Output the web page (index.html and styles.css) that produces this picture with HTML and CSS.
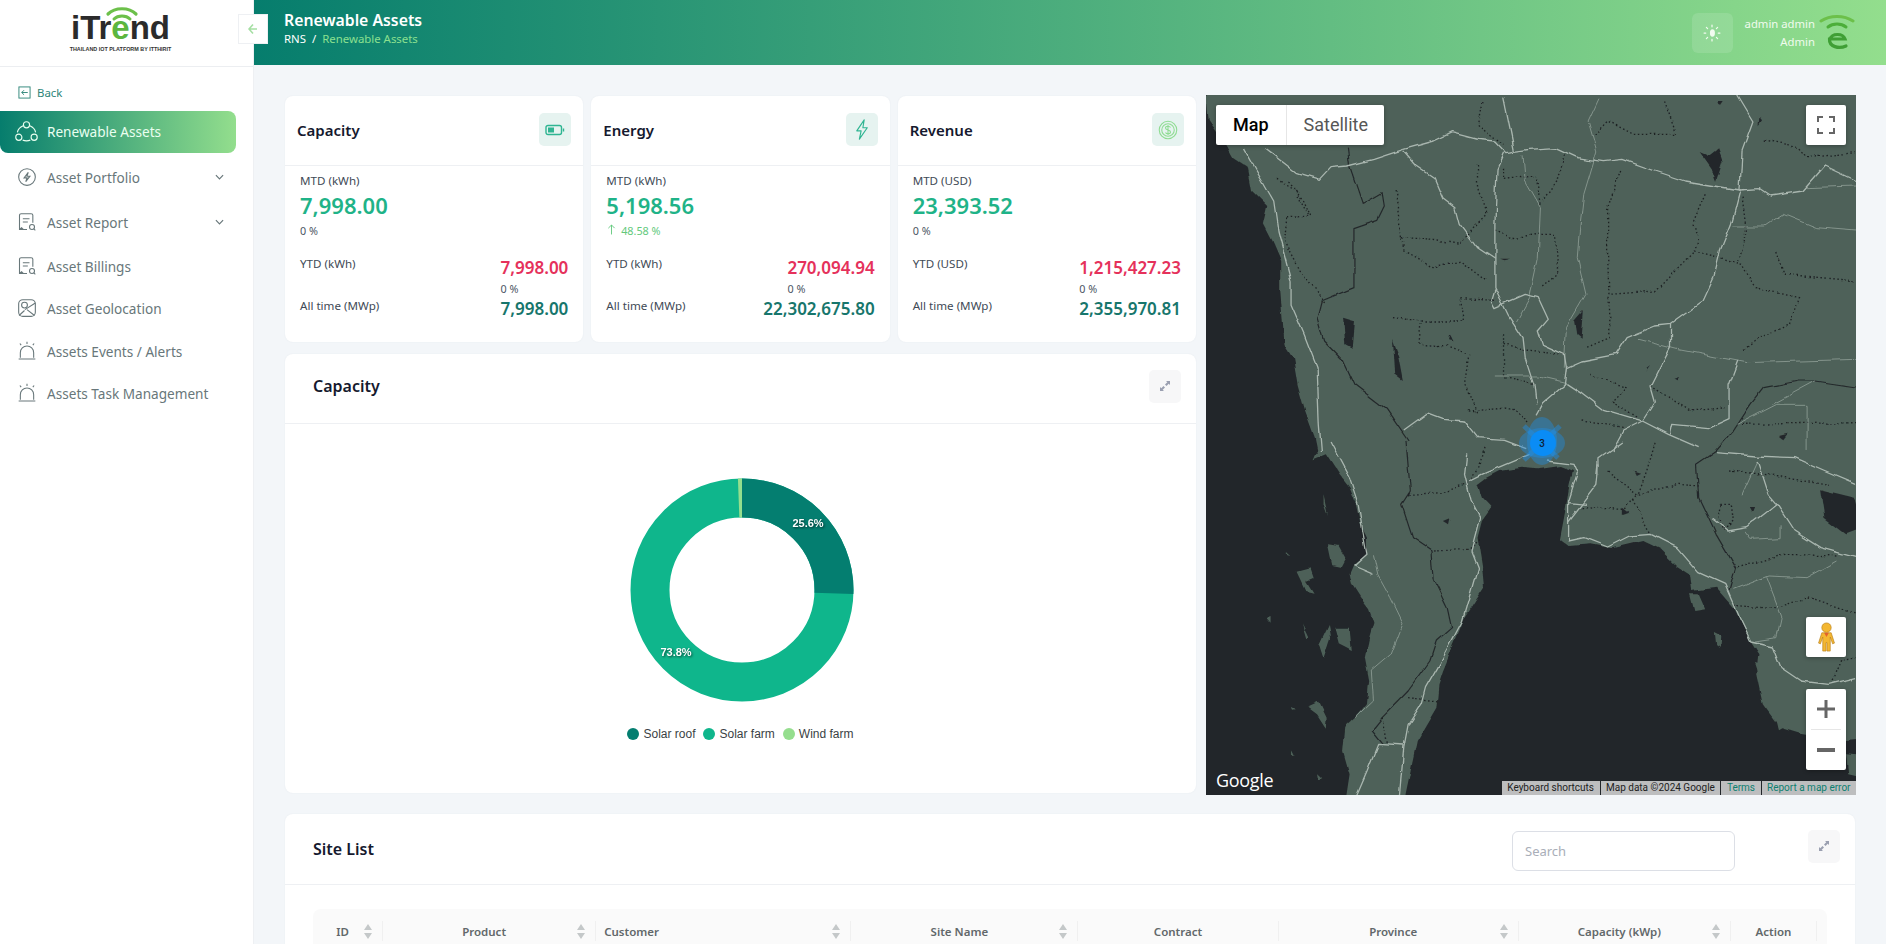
FILE: index.html
```html
<!DOCTYPE html>
<html lang="en">

<head>
    <meta charset="UTF-8">
    <title>Renewable Assets</title>
    <link rel="stylesheet" href="styles.css">
</head>

<body>
    <aside class="sidebar">
        <div class="logo">
            <svg class="logo-wifi" viewBox="0 0 34 20" width="34" height="20">
                <path d="M3 8 C10 1 24 1 31 8" fill="none" stroke="#6cc04a" stroke-width="3.2" stroke-linecap="round"/>
                <path d="M9 13 C13 9 21 9 25 13" fill="none" stroke="#6cc04a" stroke-width="3" stroke-linecap="round"/>
            </svg>
            <div class="logo-word">iTr<span class="logo-e">e</span>nd</div>
            <div class="logo-sub">THAILAND IOT PLATFORM BY ITTHIRIT</div>
        </div>
        <a class="back">
            <svg viewBox="0 0 14 14" width="13" height="13" fill="none" stroke="#2d8578" stroke-width="1">
                <rect x="1" y="1" width="12" height="12"/>
                <path d="M10.5 7H4M6.5 4.5 4 7l2.5 2.5"/>
            </svg>
            Back
        </a>
        <nav class="menu">
            <div class="menu-item active">
                <svg viewBox="0 0 24 24" width="23" height="23" fill="none" stroke="currentColor" stroke-width="1.200">
                    <circle cx="12" cy="5" r="3.200"/><circle cx="4" cy="18" r="3.200"/><circle cx="20" cy="18" r="3.200"/>
                    <path d="M8 21c2.500 1 5.500 1 8 0M2.500 13C3 10 5 7.500 8.500 6M21.500 13C21 10 19 7.500 15.500 6"/>
                </svg>
                <span>Renewable Assets</span>
            </div>
            <div class="menu-item">
                <svg viewBox="0 0 24 24" width="20" height="20" fill="none" stroke="currentColor" stroke-width="1.3">
                    <circle cx="12" cy="12" r="10"/><path d="M13.500 6.500 8.500 13H12l-1.500 4.500 5-6.500h-3.500z"/>
                </svg>
                <span>Asset Portfolio</span>
                <svg class="chev" viewBox="0 0 10 6" width="9" height="6" fill="none" stroke="currentColor" stroke-width="1.300"><path d="M1 1l4 4 4-4"/></svg>
            </div>
            <div class="menu-item item-report">
                <svg viewBox="0 0 24 24" width="20" height="20" fill="none" stroke="currentColor" stroke-width="1.3">
                    <path d="M12 21H5l-2 0V4a2 2 0 0 1 2-2h12a2 2 0 0 1 2 2v9M7 8h8M7 12h6M3 21l2.500-2 2 2"/><circle cx="18" cy="18" r="3"/><path d="m20 20 2 2"/>
                </svg>
                <span>Asset Report</span>
                <svg class="chev" viewBox="0 0 10 6" width="9" height="6" fill="none" stroke="currentColor" stroke-width="1.300"><path d="M1 1l4 4 4-4"/></svg>
            </div>
            <div class="menu-item item-billing">
                <svg viewBox="0 0 24 24" width="20" height="20" fill="none" stroke="currentColor" stroke-width="1.3">
                    <path d="M12 21H5l-2 0V4a2 2 0 0 1 2-2h12a2 2 0 0 1 2 2v9M7 8h8M7 12h6M3 21l2.500-2 2 2"/><circle cx="18" cy="18" r="3"/><path d="m20 20 2 2"/>
                </svg>
                <span>Asset Billings</span>
            </div>
            <div class="menu-item">
                <svg viewBox="0 0 24 24" width="20" height="20" fill="none" stroke="currentColor" stroke-width="1.3">
                    <rect x="2" y="2" width="20" height="20" rx="5"/><circle cx="9" cy="8.500" r="3.500"/><path d="M9 15 2.500 21M9.500 14 22 6M12 14l9 7"/>
                </svg>
                <span>Asset Geolocation</span>
            </div>
            <div class="menu-item item-events">
                <svg viewBox="0 0 24 24" width="20" height="20" fill="none" stroke="currentColor" stroke-width="1.3">
                    <path d="M4 20v-6a8 8 0 0 1 16 0v6M2 21.500h20M12 1v2.500M3.500 3 5 5M20.500 3 19 5"/>
                </svg>
                <span>Assets Events / Alerts</span>
            </div>
            <div class="menu-item">
                <svg viewBox="0 0 24 24" width="20" height="20" fill="none" stroke="currentColor" stroke-width="1.3">
                    <path d="M4 20v-6a8 8 0 0 1 16 0v6M2 21.500h20M12 1v2.500M3.500 3 5 5M20.500 3 19 5"/>
                </svg>
                <span>Assets Task Management</span>
            </div>
        </nav>
    </aside>

    <button class="collapse">
        <svg viewBox="0 0 10 12" width="10" height="12" fill="none" stroke="#a5dfa3" stroke-width="1.600"><path d="M9 6H1.500M5 1.500 1 6l4 4.500"/></svg>
    </button>

    <div class="main">
        <header class="topbar">
            <div class="topbar-left">
                <div class="page-title">Renewable Assets</div>
                <div class="crumbs">RNS <span class="crumb-sep">/</span> <span class="crumb-now">Renewable Assets</span></div>
            </div>
            <div class="topbar-right">
                <div class="theme-btn">
                    <svg viewBox="0 0 24 24" width="20" height="20" fill="none" stroke="#f2fbf0" stroke-width="1.500" stroke-linecap="round">
                        <ellipse cx="12.500" cy="12" rx="3" ry="4.500" fill="#f2fbf0" stroke="none"/>
                        <path d="M12 2.500v2M12 19.500v2M2.500 12h2M19.500 12h2M5.300 5.300l1.400 1.400M17.300 17.300l1.400 1.400M5.300 18.700l1.400-1.400M17.300 6.700l1.400-1.400"/>
                    </svg>
                </div>
                <div class="user">
                    <div>admin admin</div>
                    <div>Admin</div>
                </div>
                <svg class="avatar" viewBox="0 0 36 36" width="36" height="36" fill="none" stroke-linecap="round">
                    <path d="M2 6C11 0 25 0 34 6" stroke="#6cc04a" stroke-width="3"/>
                    <path d="M9 12C14 8 22 8 27 12" stroke="#4cae3a" stroke-width="3"/>
                    <path d="M11 24C13 18 24 18 26 24H10.500C10 32 20 34 27 31" stroke="#3f9f35" stroke-width="3.200"/>
                </svg>
            </div>
        </header>

        <div class="content">
            <div class="top-grid">
                <div class="left-col">
                    <div class="stats">
                        <section class="card stat">
                            <div class="stat-head">
                                <h3>Capacity</h3>
                                <div class="stat-icon">
                                    <svg viewBox="0 0 20 12" width="20" height="12" fill="none" stroke="#2fb592" stroke-width="1.400">
                                        <rect x="1" y="1.500" width="15.500" height="9" rx="2"/><rect x="3" y="3.500" width="6" height="5" fill="#2fb592" stroke="none"/><path d="M18.500 4.500v3"/>
                                    </svg>
                                </div>
                            </div>
                            <div class="stat-body">
                                <div class="lbl">MTD (kWh)</div>
                                <div class="big">7,998.00</div>
                                <div class="pct">0 %</div>
                                <div class="row row-ytd">
                                    <div class="lbl">YTD (kWh)</div>
                                    <div class="side">
                                        <div class="val red">7,998.00</div>
                                        <div class="pct">0 %</div>
                                    </div>
                                </div>
                                <div class="row">
                                    <div class="lbl">All time (MWp)</div>
                                    <div class="val teal">7,998.00</div>
                                </div>
                            </div>
                        </section>
                        <section class="card stat">
                            <div class="stat-head">
                                <h3>Energy</h3>
                                <div class="stat-icon">
                                    <svg viewBox="0 0 16 24" width="14" height="21" fill="none" stroke="#2fb592" stroke-width="1.300" stroke-linejoin="round">
                                        <path d="M10.500 1 2 13.500h5L5 23l9-13H9z"/>
                                    </svg>
                                </div>
                            </div>
                            <div class="stat-body">
                                <div class="lbl">MTD (kWh)</div>
                                <div class="big">5,198.56</div>
                                <div class="pct up">
                                    <svg viewBox="0 0 10 12" width="9" height="11" fill="none" stroke="#5fc77a" stroke-width="1"><path d="M5 11.500V1M1.500 4.500 5 1l3.500 3.500"/></svg>
                                    48.58 %
                                </div>
                                <div class="row row-ytd">
                                    <div class="lbl">YTD (kWh)</div>
                                    <div class="side">
                                        <div class="val red">270,094.94</div>
                                        <div class="pct">0 %</div>
                                    </div>
                                </div>
                                <div class="row">
                                    <div class="lbl">All time (MWp)</div>
                                    <div class="val teal">22,302,675.80</div>
                                </div>
                            </div>
                        </section>
                        <section class="card stat">
                            <div class="stat-head">
                                <h3>Revenue</h3>
                                <div class="stat-icon">
                                    <svg viewBox="0 0 24 24" width="20" height="20" fill="none" stroke="#8fdc92" stroke-width="1.300">
                                        <circle cx="12" cy="12" r="10.500"/><circle cx="12" cy="12" r="7.500"/>
                                        <path d="M15 9c-.5-1-1.500-1.500-3-1.500-1.800 0-3 .9-3 2.200 0 3 6 1.600 6 4.600 0 1.300-1.200 2.200-3 2.200-1.500 0-2.500-.5-3-1.500M12 6v12"/>
                                    </svg>
                                </div>
                            </div>
                            <div class="stat-body">
                                <div class="lbl">MTD (USD)</div>
                                <div class="big">23,393.52</div>
                                <div class="pct">0 %</div>
                                <div class="row row-ytd">
                                    <div class="lbl">YTD (USD)</div>
                                    <div class="side">
                                        <div class="val red">1,215,427.23</div>
                                        <div class="pct">0 %</div>
                                    </div>
                                </div>
                                <div class="row">
                                    <div class="lbl">All time (MWp)</div>
                                    <div class="val teal">2,355,970.81</div>
                                </div>
                            </div>
                        </section>
                    </div>

                    <section class="card chart-card">
                        <div class="card-head chart-head">
                            <h2>Capacity</h2>
                            <div class="expand">
                                <svg viewBox="0 0 12 12" width="12" height="12" fill="#9a9fb0"><path d="M7 1h4v4L9.700 3.700 7.500 6 6 4.500l2.300-2.200zM5 11H1V7l1.300 1.300L4.500 6 6 7.500 3.700 9.700z"/></svg>
                            </div>
                        </div>
                        <div class="chart-body">
                            <svg class="donut" viewBox="0 0 224 224" width="224" height="224">
                                <g transform="rotate(-90 112 112)" fill="none" stroke-width="39">
                                    <circle cx="112" cy="112" r="92" pathLength="100" stroke="#0fb68c" />
                                    <circle cx="112" cy="112" r="92" pathLength="100" stroke="#047e70" stroke-dasharray="25.600 74.400"/>
                                    <circle cx="112" cy="112" r="92" pathLength="100" stroke="#95de8e" stroke-dasharray="0.600 99.400" stroke-dashoffset="0.600"/>
                                </g>
                                <text class="donut-label" x="178" y="49">25.6%</text>
                                <text class="donut-label" x="46" y="178">73.8%</text>
                            </svg>
                            <div class="legend">
                                <span class="legend-item"><i class="dot dot-roof"></i>Solar roof</span>
                                <span class="legend-item"><i class="dot dot-farm"></i>Solar farm</span>
                                <span class="legend-item"><i class="dot dot-wind"></i>Wind farm</span>
                            </div>
                        </div>
                    </section>
                </div>

                <div class="map">
                    <svg class="map-art" viewBox="0 -1 650 700" width="650" height="700">
                        <defs>
                            <filter id="rough" filterUnits="userSpaceOnUse" x="-10" y="-10" width="670" height="720">
                                <feTurbulence type="fractalNoise" baseFrequency=".05" numOctaves="2" seed="4"/>
                                <feDisplacementMap in="SourceGraphic" scale="6" xChannelSelector="R" yChannelSelector="G"/>
                            </filter>
                        </defs>
                        <rect y="-1" width="650" height="700" fill="#4e6159"/>
                        <g filter="url(#rough)">
                        <!-- upper half, traced from the top of the map -->
                        <g transform="translate(-6 -5) scale(.43365 .33333)">
                            <polygon class="water" points="-20,0 14,0 20,90 60,165 75,200 110,230 120,300 155,345 145,400 165,450 185,510 185,600 190,680 195,760 215,800 225,880 240,950 265,1040 272,1085 -20,1085"/>
                            <polygon class="water" points="1150,180 1175,195 1195,175 1205,210 1190,270 1180,235"/>
                            <polygon class="water" points="1290,75 1296,85 1288,100"/>
                            <polygon class="water" points="1190,30 1203,30 1195,45"/>
                            <polygon class="water" points="330,680 355,690 350,770 335,760"/>
                            <polygon class="water" points="445,745 460,800 470,870 450,850"/>
                            <polygon class="water" points="865,690 885,660 880,740 870,730"/>
                            <polygon class="water" points="1030,830 1038,822 1028,840"/>
                            <polygon class="water" points="1092,860 1105,855 1100,865"/>
                            <polygon class="water" points="1335,1035 1355,1028 1345,1045"/>
                            <polygon class="water" points="690,503 715,503 700,508"/>
                            <polygon class="water" points="572,745 582,748 575,728"/>
                            <polyline class="prov" points="340,170 345,225 375,340 420,305 425,345 410,385 355,410 355,590 280,630 270,680 285,750 330,810 355,880 430,955 480,1050"/>
                            <polyline class="prov" points="1513,888 1420,870 1380,870 1300,890 1270,940 1230,1020 1190,1080"/>
                            <polyline class="dots" points="200,380 255,375 240,330 200,270"/>
                            <polyline class="dots" points="200,380 195,450 240,560 290,640"/>
                            <polyline class="dots" points="465,440 540,445 600,460 630,410 660,370 640,290 640,215"/>
                            <polyline class="dots" points="450,300 465,440 470,480 540,530 600,510 660,570"/>
                            <polyline class="dots" points="700,230 700,265 775,255 785,350"/>
                            <polyline class="dots" points="680,420 720,440 780,430 820,430 825,550 790,590"/>
                            <polyline class="dots" points="840,190 830,250 790,330"/>
                            <polyline class="dots" points="910,130 940,90 1000,130 1100,130 1070,30"/>
                            <polyline class="dots" points="970,240 940,350 940,500 945,680 945,740 890,770"/>
                            <polyline class="dots" points="1165,310 1135,400 1150,440 1140,480 1080,560 1050,600 945,610"/>
                            <polyline class="dots" points="1140,480 1200,500 1250,520 1280,590 1380,620 1360,700 1290,740 1250,780"/>
                            <polyline class="dots" points="1300,150 1380,170 1400,200 1510,185"/>
                            <polyline class="dots" points="1250,320 1260,420 1240,510"/>
                            <polyline class="dots" points="1330,480 1350,550 1513,570"/>
                            <polyline class="dots" points="680,625 600,620 610,690 510,690 505,760 570,765 620,790 610,880 640,970"/>
                            <polyline class="dots" points="445,680 510,690"/>
                            <polyline class="dots" points="700,730 700,860 770,880"/>
                            <polyline class="dots" points="700,760 750,780 840,790"/>
                            <polyline class="dots" points="900,850 980,890 950,930 1010,980"/>
                            <polyline class="dots" points="1040,885 1130,960 1210,950"/>
                            <polyline class="dots" points="1250,1000 1513,995"/>
                            <polyline class="dots" points="620,960 720,950 760,1000"/>
                            <polyline class="dots" points="880,990 980,1010"/>
                            <polyline class="dots" points="175,265 220,300 250,370"/>
                            <polyline class="dots" points="650,30 640,100 700,160"/>
                            <polyline class="road thin" points="745,190 750,270 785,350 780,500 760,620 730,690"/>
                            <polyline class="road thin" points="920,20 895,90 915,180 885,310 875,420 870,500 890,610 845,710 840,830"/>
                            <polyline class="road thin" points="1230,405 1305,405 1345,370 1420,410 1513,420"/>
                            <polyline class="road thin" points="1010,745 1100,775 1260,815 1513,805"/>
                            <polyline class="road thin" points="680,855 780,855 845,875"/>
                            <polyline class="road thin" points="1400,290 1513,285"/>
                            <polyline class="road thin" points="1320,940 1420,870"/>
                            <polyline class="road thin" points="1240,1000 1330,940 1400,940 1400,1080"/>
                            <polyline class="road" points="470,175 540,150 580,125 640,145 680,150 705,185 760,175 820,170 870,200 930,212 975,205 1050,240 1120,270 1190,285 1245,297 1290,293 1315,315 1390,300 1440,225 1513,270"/>
                            <polyline class="road" points="150,170 190,210 225,245 275,265 300,230 340,225 400,205 470,175"/>
                            <polyline class="road" points="470,180 500,225 540,260 560,320 590,350 600,400 640,470 680,505"/>
                            <polyline class="road" points="700,20 725,180"/>
                            <polyline class="road" points="700,185 685,230 680,400 680,590 710,670 745,740 750,800 770,880 775,940"/>
                            <polyline class="road" points="100,170 130,240 170,330 180,420 210,570 210,640 240,730 270,830 275,1000 280,1080"/>
                            <polyline class="road" points="1240,15 1275,90 1250,180 1245,300 1225,400 1200,480 1185,560 1160,630 1085,700 1050,705 985,740 960,790 880,810 845,830 840,880 790,935 775,970"/>
                            <polyline class="road" points="1085,700 1085,770 1040,885 1050,930 1020,990 975,1020 950,1080"/>
                            <polyline class="road" points="680,595 672,630 680,650 750,610 780,620 803,685 780,720 790,760 840,790 845,830"/>
                            <polyline class="road" points="845,875 880,905 930,955 1020,990 1080,1030 1150,1070"/>
                            <polyline class="road" points="1240,810 1220,880 1220,980 1170,1010 1090,1000 1085,1030"/>
                            <polyline class="road" points="470,1020 525,968 560,985 610,990 640,1040 700,1045 750,1070"/>
                        </g>
                        <!-- lower half, gulf and peninsula -->
                        <g transform="translate(-6 345) scale(.43365 .33333)">
                            <polygon class="water" points="-20,-5 248,-5 270,30 262,55 290,40 320,100 345,140 360,190 370,250 385,290 385,340 355,370 345,400 350,430 370,470 390,505 400,545 390,590 380,650 390,720 385,790 360,830 335,860 330,930 345,1000 335,1085 -20,1085"/>
                            <polygon class="water" points="640,130 660,110 690,90 740,80 780,85 830,75 860,90 850,150 845,190 838,240 830,295 850,315 900,310 950,322 1020,300 1060,325 1100,375 1130,400 1135,450 1190,440 1230,500 1270,600 1290,640 1285,700 1300,790 1340,860 1390,880 1490,900 1530,895 1530,1085 470,1085 490,960 500,900 545,800 550,730 560,690 610,530 655,440 650,370 640,290 650,240 672,200 650,170"/>
                            <polygon class="land" points="285,160 295,225 285,190"/>
                            <polygon class="land" points="295,310 320,315 335,350 325,375 305,370"/>
                            <polygon class="land" points="225,395 255,385 262,410 245,420 262,455 245,450"/>
                            <polygon class="land" points="235,550 250,590 245,595"/>
                            <polygon class="land" points="275,610 295,555 300,590 285,650"/>
                            <polygon class="land" points="310,560 345,560 350,630 320,610"/>
                            <polygon class="land" points="250,800 275,785 292,830 290,860 270,820"/>
                            <polygon class="land" points="198,330 208,342 198,338"/>
                            <polygon class="land" points="210,800 220,810 212,812"/>
                            <polygon class="land" points="212,925 218,940 212,942"/>
                            <polygon class="land" points="155,530 165,525 165,545"/>
                            <polygon class="land" points="270,1000 282,1015 272,1018"/>
                            <polygon class="land" points="1130,460 1150,460 1165,505 1140,510"/>
                            <polygon class="land" points="1185,570 1200,580 1198,618 1188,610"/>
                            <polygon class="land" points="1280,665 1292,670 1290,705"/>
                            <polygon class="land" points="1330,840 1345,860 1335,868"/>
                            <polygon class="land" points="1490,940 1530,945 1530,1010 1495,1000"/>
                            <polygon class="water" points="1430,145 1510,170 1530,260 1490,280 1440,230"/>
                            <polygon class="water" points="1000,92 1015,98 1005,105"/>
                            <polygon class="water" points="975,200 990,215 975,222"/>
                            <polygon class="water" points="560,240 575,232 572,250"/>
                            <polygon class="water" points="1268,195 1280,195 1275,212"/>
                            <polyline class="prov" points="475,0 485,150 465,190 490,290 535,330 540,420 570,500 580,560 545,600 530,660 480,750 420,830 395,870 420,910"/>
                            <polyline class="prov" points="1190,30 1145,70 1150,170 1190,280 1235,380 1220,450"/>
                            <polyline class="dots" points="480,160 560,155 620,125 640,80 660,20"/>
                            <polyline class="dots" points="540,330 620,325 650,290"/>
                            <polyline class="dots" points="880,200 980,205 1010,160 1100,130 1150,135"/>
                            <polyline class="dots" points="940,90 1010,160 1030,90 1050,0"/>
                            <polyline class="dots" points="1000,175 1030,260 1040,280"/>
                            <polyline class="dots" points="1240,380 1350,340 1470,345"/>
                            <polyline class="dots" points="1230,490 1330,500 1400,470 1513,520"/>
                            <polyline class="dots" points="420,830 430,910"/>
                            <polyline class="dots" points="480,770 550,780"/>
                            <polyline class="dots" points="1220,90 1340,105 1450,130"/>
                            <polyline class="dots" points="1460,720 1480,660 1513,650"/>
                            <polyline class="dots" points="1200,190 1225,190 1230,240 1205,270 1195,230 1200,190"/>
                            <polyline class="road thin" points="400,340 410,400 440,470 468,545 440,640 395,690 400,780 360,830"/>
                            <polyline class="road thin" points="1230,445 1310,405 1400,410 1470,360"/>
                            <polyline class="road thin" points="1305,410 1340,530 1330,590 1280,600"/>
                            <polyline class="road thin" points="1340,250 1340,290 1270,295 1255,270"/>
                            <polyline class="road thin" points="1285,60 1250,160"/>
                            <polyline class="road" points="300,0 345,110 365,190 375,270 385,340 355,375 400,400"/>
                            <polyline class="road" points="615,40 610,100 625,180 645,230 625,330 640,380 625,450 605,540 560,650 520,740 510,790 480,850 470,920 460,1060"/>
                            <polyline class="road" points="470,915 410,910 385,990 360,1065"/>
                            <polyline class="road" points="760,40 650,100 620,120"/>
                            <polyline class="road" points="800,60 860,70 870,100 850,180 850,300"/>
                            <polyline class="road" points="920,70 915,130 880,190 850,240"/>
                            <polyline class="road" points="850,185 890,190"/>
                            <polyline class="road" points="850,300 885,290 940,318 990,285 1040,280 1100,320 1150,395 1210,430 1240,520 1270,600 1320,615 1340,680 1385,720 1450,730 1513,710"/>
                            <polyline class="road" points="975,0 920,50 920,100"/>
                            <polyline class="road" points="1190,35 1280,45 1370,50 1440,90 1513,130"/>
                            <polyline class="road" points="1285,60 1310,160 1330,190 1370,270 1430,320 1513,350"/>
                            <polyline class="road" points="1180,235 1215,270 1260,260 1330,190"/>
                        </g>
                        </g>
                        <!-- marker cluster -->
                        <g class="cluster">
                            <ellipse cx="336" cy="347" rx="23" ry="15" fill="#1f8fe8" opacity=".4"/>
                            <ellipse cx="336" cy="345" rx="15" ry="24" fill="#1f8fe8" opacity=".4"/>
                            <path d="M318 330 352 362M354 330 318 364" stroke="#1f8fe8" stroke-width="5" opacity=".45"/>
                            <circle cx="337" cy="347" r="13" fill="#0a8cf5"/>
                            <text class="cluster-num" x="336" y="351">3</text>
                        </g>
                    </svg>

                    <div class="map-type">
                        <span class="map-tab on">Map</span>
                        <span class="map-tab">Satellite</span>
                    </div>
                    <div class="map-btn map-full">
                        <svg viewBox="0 0 18 18" width="18" height="18" fill="none" stroke="#666" stroke-width="2"><path d="M1 6V1h5M12 1h5v5M17 12v5h-5M6 17H1v-5"/></svg>
                    </div>
                    <div class="map-btn map-peg">
                        <svg viewBox="0 0 20 32" width="19" height="30" fill="#f4b731" stroke="#b8801d" stroke-width=".7">
                            <circle cx="10" cy="6" r="5"/>
                            <path d="M5 11.500h10l3.500 11-2 .8L14 16v15h-3.500v-9h-1v9H6V16l-2.500 7.300-2-.8z"/>
                            <path d="M7.500 11.500h5L10 16z" fill="#e2632a" stroke="none"/>
                        </svg>
                    </div>
                    <div class="map-zoom">
                        <div class="zoom-btn"><svg viewBox="0 0 18 18" width="18" height="18" fill="#666"><path d="M7.500 0h3v7.500H18v3h-7.500V18h-3v-7.500H0v-3h7.500z"/></svg></div>
                        <div class="zoom-line"></div>
                        <div class="zoom-btn"><svg viewBox="0 0 18 18" width="18" height="18" fill="#666"><path d="M0 7h18v4H0z"/></svg></div>
                    </div>
                    <div class="google">Google</div>
                    <div class="attrib">
                        <span>Keyboard shortcuts</span>
                        <span>Map data ©2024 Google</span>
                        <span class="attr-link">Terms</span>
                        <span class="attr-link">Report a map error</span>
                    </div>
                </div>
            </div>

            <section class="card site-card">
                <div class="card-head site-head">
                    <h2>Site List</h2>
                    <input class="search" type="text" placeholder="Search">
                    <div class="expand">
                        <svg viewBox="0 0 12 12" width="12" height="12" fill="#9a9fb0"><path d="M7 1h4v4L9.700 3.700 7.500 6 6 4.500l2.300-2.200zM5 11H1V7l1.300 1.300L4.500 6 6 7.500 3.700 9.700z"/></svg>
                    </div>
                </div>
                <div class="table-wrap">
                    <table class="sites">
                        <colgroup>
                            <col class="c-id"><col class="c-product"><col class="c-customer"><col class="c-site"><col class="c-contract"><col class="c-province"><col class="c-capacity"><col class="c-action"><col class="c-gutter">
                        </colgroup>
                        <thead>
                            <tr>
                                <th><div class="th"><span class="th-name">ID</span><i class="sorter"></i></div></th>
                                <th><div class="th"><span class="th-name">Product</span><i class="sorter"></i></div></th>
                                <th><div class="th"><span class="th-name left">Customer</span><i class="sorter"></i></div></th>
                                <th><div class="th"><span class="th-name">Site Name</span><i class="sorter"></i></div></th>
                                <th><div class="th"><span class="th-name">Contract</span></div></th>
                                <th><div class="th"><span class="th-name">Province</span><i class="sorter"></i></div></th>
                                <th><div class="th"><span class="th-name">Capacity (kWp)</span><i class="sorter"></i></div></th>
                                <th><div class="th"><span class="th-name">Action</span></div></th>
                                <th class="gutter"></th>
                            </tr>
                        </thead>
                    </table>
                </div>
            </section>
        </div>
    </div>
</body>

</html>
```

FILE: styles.css
```css
* {
    box-sizing: border-box;
}

html,
body {
    height: 100%;
    margin: 0;
    overflow: hidden;
}

body {
    display: flex;
    position: relative;
    font-family: "Noto Sans", Arial, sans-serif;
    background-color: #f3f6f9;
    color: #1f2937;
}

h2,
h3 {
    margin: 0;
    font-weight: 600;
    color: #15192e;
}

/* sidebar */
.sidebar {
    flex: 0 0 254px;
    background-color: #fff;
    border-right: 1px solid #eef0f3;
}

.logo {
    position: relative;
    height: 67px;
    border-bottom: 1px solid #eceef1;
    padding-top: 9px;
    text-align: center;
}

.logo-wifi {
    position: absolute;
    left: 105px;
    top: 6px;
}

.logo-word {
    font-family: "Liberation Sans", Arial, sans-serif;
    font-weight: 700;
    font-size: 33px;
    line-height: 37px;
    color: #2b2b2b;
    margin-left: -12px;
}

.logo-e {
    color: #5cb63f;
}

.logo-sub {
    font-family: "Liberation Sans", Arial, sans-serif;
    font-size: 5.400px;
    font-weight: 700;
    line-height: 7px;
    margin-left: -12px;
    color: #333;
}

.back {
    display: flex;
    align-items: center;
    gap: 6px;
    height: 44px;
    padding: 6px 0 0 18px;
    font-size: 11.400px;
    color: #2d8578;
}

.menu-item {
    display: flex;
    align-items: center;
    width: 236px;
    height: 42px;
    padding-left: 17px;
    font-size: 13.600px;
    color: #68777a;
}

.menu-item svg:first-child {
    flex: none;
    margin-right: 10px;
}

.menu-item.active {
    padding: 0 0 2px 15px;
    margin-bottom: 3px;
    border-radius: 0 8px 8px 8px;
    background: linear-gradient(90deg, #067d6d, #93de8d);
    color: #e9fff0;
}

.menu-item.active svg:first-child {
    margin-right: 9px;
}

.item-report {
    margin-top: 3px;
}

.item-billing {
    margin-top: 2px;
}

.item-events {
    margin-top: 1px;
}

.chev {
    margin-left: auto;
    margin-right: 12px;
}

.collapse {
    position: absolute;
    left: 238px;
    top: 14px;
    width: 30px;
    height: 30px;
    padding: 0;
    display: flex;
    align-items: center;
    justify-content: center;
    background-color: #fff;
    border: 1px solid #eef0f3;
}

/* top bar */
.main {
    flex: 1;
    min-width: 0;
}

.topbar {
    display: flex;
    align-items: center;
    justify-content: space-between;
    height: 65px;
    padding: 0 31px 0 30px;
    background: linear-gradient(90deg, #067d6d, #93de8d);
    color: #fff;
}

.topbar-left {
    align-self: flex-start;
    padding-top: 9px;
}

.page-title {
    font-size: 15.800px;
    font-weight: 600;
    line-height: 22px;
}

.crumbs {
    font-size: 11.400px;
    line-height: 15px;
}

.crumb-sep {
    margin: 0 3px;
}

.crumb-now {
    color: #8be08f;
}

.topbar-right {
    display: flex;
    align-items: center;
}

.theme-btn {
    display: flex;
    align-items: center;
    justify-content: center;
    width: 41px;
    height: 40px;
    margin-right: 12px;
    border-radius: 6px;
    background-color: rgba(255, 255, 255, .12);
}

.user {
    font-size: 11.300px;
    line-height: 18px;
    text-align: right;
    color: #f0fbee;
    margin-right: 4px;
}

/* page content */
.content {
    padding: 31px 30px 0 31px;
}

.top-grid {
    display: flex;
    gap: 10px;
}

.left-col {
    width: 911px;
}

.card {
    background-color: #fff;
    border-radius: 8px;
    box-shadow: 0 0 2px rgba(40, 60, 80, .06);
}

.stats {
    display: flex;
    gap: 8px;
}

.stat {
    flex: 1;
    height: 246px;
}

.stat-head {
    display: flex;
    align-items: center;
    justify-content: space-between;
    height: 70px;
    padding: 0 12px 2px;
    border-bottom: 1px solid #eef0f3;
}

.stat-head h3 {
    font-size: 15px;
}

.stat-icon {
    display: flex;
    align-items: center;
    justify-content: center;
    width: 32px;
    height: 33px;
    border-radius: 5px;
    background-color: #e6f3f0;
}

.stat-body {
    padding: 7px 15px 0;
}

.lbl {
    font-size: 11.600px;
    line-height: 16px;
    color: #414a56;
}

.big {
    font-size: 22px;
    font-weight: 600;
    line-height: 30px;
    margin-top: 1px;
    color: #1fb388;
}

.pct {
    font-size: 10.800px;
    line-height: 14px;
    margin-top: 4px;
    color: #4b5563;
}

.pct.up {
    color: #63c97c;
}

.pct.up svg {
    margin: 0 2px 0 1px;
}

.row {
    display: flex;
    justify-content: space-between;
    height: 18px;
}

.row-ytd {
    height: 42px;
    margin-top: 18px;
}

.val {
    font-size: 17px;
    font-weight: 600;
    line-height: 22px;
}

.side {
    padding-top: 1px;
}

.side .pct {
    margin-top: 3px;
}

.red {
    color: #e5315b;
}

.teal {
    color: #17766c;
}

/* chart */
.chart-card {
    height: 439px;
    margin-top: 12px;
}

.card-head {
    display: flex;
    align-items: center;
    justify-content: space-between;
    height: 70px;
    padding: 0 15px 0 28px;
    border-bottom: 1px solid #eef0f3;
}

.chart-head {
    padding-bottom: 5px;
}

.card-head h2 {
    font-size: 16px;
}

.expand {
    display: flex;
    align-items: center;
    justify-content: center;
    width: 32px;
    height: 33px;
    border-radius: 5px;
    background-color: #f7f7f8;
}

.chart-body {
    display: flex;
    flex-direction: column;
    align-items: center;
    padding: 54px 0 0 3px;
}

.donut-label {
    font-family: "Liberation Sans", Arial, sans-serif;
    font-size: 11px;
    font-weight: 700;
    fill: #fff;
    text-anchor: middle;
    filter: drop-shadow(1px 1px 1px rgba(0, 0, 0, .6));
}

.legend {
    display: flex;
    gap: 8px;
    margin: 25px 0 0 -3px;
    font-family: "Liberation Sans", Arial, sans-serif;
    font-size: 12px;
    color: #3a3f44;
}

.legend-item {
    display: flex;
    align-items: center;
    gap: 4px;
}

.dot {
    width: 12px;
    height: 12px;
    border-radius: 50%;
}

.dot-roof {
    background-color: #047e70;
}

.dot-farm {
    background-color: #0fb68c;
}

.dot-wind {
    background-color: #95de8e;
}

/* map */
.map {
    position: relative;
    width: 650px;
    height: 700px;
    margin-top: -1px;
    overflow: hidden;
    font-family: Roboto, Arial, sans-serif;
}

.map-art {
    display: block;
}

.water {
    fill: #22272a;
}

.land {
    fill: #4e6159;
}

.road {
    fill: none;
    stroke: #a9b6af;
    stroke-width: 1.300px;
    stroke-linejoin: round;
    vector-effect: non-scaling-stroke;
}

.road.thin {
    stroke: #83938b;
    stroke-width: 1px;
}

.prov {
    fill: none;
    stroke: #23282a;
    stroke-width: 1.200px;
    stroke-linejoin: round;
    vector-effect: non-scaling-stroke;
}

.dots {
    fill: none;
    stroke: #1d2123;
    stroke-width: 1.300px;
    stroke-dasharray: 1.500 2.500;
    vector-effect: non-scaling-stroke;
}

.cluster-num {
    font-family: Roboto, Arial, sans-serif;
    font-size: 10px;
    font-weight: 500;
    text-anchor: middle;
    fill: #10233a;
}

.map-type {
    position: absolute;
    left: 10px;
    top: 10px;
    display: flex;
    height: 40px;
    background-color: #fff;
    border-radius: 2px;
    box-shadow: 0 1px 4px rgba(0, 0, 0, .3);
    font-size: 18px;
}

.map-tab {
    display: flex;
    align-items: center;
    padding: 0 16px 2px 17px;
    color: #565656;
}

.map-tab.on {
    font-weight: 500;
    padding-right: 17px;
    border-right: 1px solid #e6e6e6;
    color: #000;
}

.map-btn {
    position: absolute;
    right: 10px;
    display: flex;
    align-items: center;
    justify-content: center;
    width: 40px;
    height: 40px;
    background-color: #fff;
    border-radius: 2px;
    box-shadow: 0 1px 4px rgba(0, 0, 0, .3);
}

.map-full {
    top: 10px;
}

.map-peg {
    top: 522px;
}

.map-zoom {
    position: absolute;
    right: 10px;
    top: 594px;
    width: 40px;
    height: 81px;
    background-color: #fff;
    border-radius: 2px;
    box-shadow: 0 1px 4px rgba(0, 0, 0, .3);
}

.zoom-btn {
    display: flex;
    align-items: center;
    justify-content: center;
    height: 40px;
}

.zoom-line {
    height: 1px;
    margin: 0 5px;
    background-color: #e6e6e6;
}

.google {
    position: absolute;
    left: 10px;
    bottom: 4px;
    font-family: "Open Sans", Arial, sans-serif;
    font-size: 18px;
    line-height: 22px;
    letter-spacing: -.3px;
    color: #fff;
}

.attrib {
    position: absolute;
    right: 0;
    bottom: 0;
    display: flex;
    gap: 1px;
    height: 14px;
    font-size: 10px;
    line-height: 14px;
    color: #222;
}

.attrib span {
    padding: 0 5.500px;
    background-color: rgba(255, 255, 255, .7);
}

.attrib .attr-link {
    color: #0d7f6f;
}

/* site list */
.site-card {
    margin: 19px 1px 0 0;
    height: 200px;
    padding-bottom: 20px;
}

.site-head {
    justify-content: flex-start;
    height: 71px;
    padding-right: 15px;
}

.search {
    width: 223px;
    height: 40px;
    margin: 4px 73px 0 auto;
    padding: 0 12px;
    border: 1px solid #dcdfe6;
    border-radius: 6px;
    font-family: inherit;
    font-size: 13px;
    outline: none;
}

.search::placeholder {
    color: #a9aeb8;
}

.site-head .expand {
    margin-top: -6px;
}

.table-wrap {
    padding: 24px 28px 0 28px;
}

.sites {
    width: 100%;
    table-layout: fixed;
    border-collapse: collapse;
}

.c-id { width: 70px; }
.c-product { width: 213px; }
.c-customer { width: 255px; }
.c-site { width: 227px; }
.c-contract { width: 200px; }
.c-province { width: 240px; }
.c-capacity { width: 212px; }
.c-action { width: 86px; }
.c-gutter { width: 10px; }

.sites th {
    height: 44px;
    padding: 0;
    background-color: #fafafa;
    font-size: 11.500px;
    font-weight: 600;
    color: #62686a;
}

.sites th:first-child {
    border-top-left-radius: 8px;
}

.sites th.gutter {
    border-top-right-radius: 8px;
}

.th {
    display: flex;
    align-items: center;
    height: 20px;
    padding: 0 8px;
    border-right: 1px solid #f0f0f0;
}

.th-name {
    flex: 1;
    text-align: center;
}

.th-name.left {
    text-align: left;
}

.sorter {
    flex: none;
    position: relative;
    width: 10px;
    height: 15px;
}

.sorter::before,
.sorter::after {
    content: "";
    position: absolute;
    left: 0;
    border-left: 4.500px solid transparent;
    border-right: 4.500px solid transparent;
}

.sorter::before {
    top: 0;
    border-bottom: 6px solid #c4c8c9;
}

.sorter::after {
    bottom: 0;
    border-top: 6px solid #c4c8c9;
}
```
